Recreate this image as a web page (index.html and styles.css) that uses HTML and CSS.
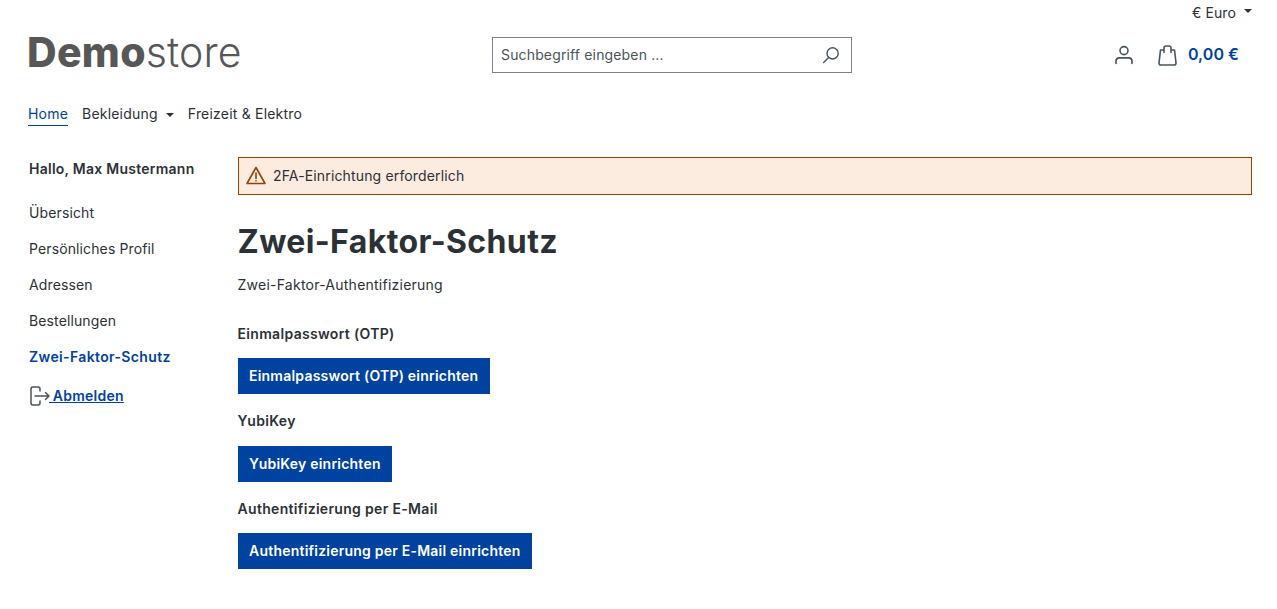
FILE: index.html
```html
<!DOCTYPE html>
<html lang="de">
  <head>
    <meta charset="utf-8">
    <meta name="viewport" content="width=device-width, initial-scale=1" />
    <title>Zwei-Faktor-Schutz</title>
    <link rel="stylesheet" href="styles.css">
  </head>
  <body>

    <div class="top-bar">
      <span class="currency">€ Euro</span>
      <span class="caret"></span>
    </div>

    <header class="header">
      <a class="logo" href="#"><b>Demo</b>store</a>
      <form class="search">
        <input class="search-input" type="text" placeholder="Suchbegriff eingeben ...">
        <svg class="search-icon" width="18" height="18" viewBox="0 0 18 18" fill="none" stroke="#4a545b" stroke-width="1.4">
          <circle cx="10.6" cy="7.4" r="5.6"/>
          <path d="M6.6 11.4 1.6 16.4" stroke-linecap="round"/>
        </svg>
      </form>
      <div class="header-actions">
        <svg class="user-icon" width="18" height="20" viewBox="0 0 18 20" fill="none" stroke="#4a545b" stroke-width="1.6" stroke-linecap="round">
          <circle cx="9" cy="5.6" r="4"/>
          <path d="M1 18.5v-2.2c0-2 1.6-3.4 3.5-3.4h9c1.900 0 3.500 1.400 3.500 3.400v2.200"/>
        </svg>
        <svg class="bag-icon" width="21" height="21" viewBox="0 0 21 21" fill="none" stroke="#4a545b" stroke-width="1.6" stroke-linecap="round" stroke-linejoin="round">
          <path d="M6.500 5H3.500L2 18c-.1 1 .6 2 1.800 2h13.400c1.200 0 1.900-1 1.800-2L17.500 5H14.500"/>
          <path d="M7 7.500V3c0-1.200.8-2 2-2h3c1.200 0 2 .8 2 2v4.500"/>
        </svg>
        <span class="cart-total">0,00 €</span>
      </div>
    </header>

    <nav class="main-nav">
      <a class="nav-link active" href="#">Home</a>
      <a class="nav-link" href="#">Bekleidung <span class="caret"></span></a>
      <a class="nav-link" href="#">Freizeit &amp; Elektro</a>
    </nav>

    <div class="content">
      <aside class="sidebar">
        <div class="hello">Hallo, Max Mustermann</div>
        <a class="side-link" href="#">Übersicht</a>
        <a class="side-link" href="#">Persönliches Profil</a>
        <a class="side-link" href="#">Adressen</a>
        <a class="side-link" href="#">Bestellungen</a>
        <a class="side-link current" href="#">Zwei-Faktor-Schutz</a>
        <a class="logout" href="#">
          <svg width="22" height="20" viewBox="0 0 22 20" fill="none" stroke="#4a545b" stroke-width="1.500" stroke-linecap="round" stroke-linejoin="round">
            <path d="M11 5V3c0-1.200-.8-2-2-2H4C2.800 1 2 1.800 2 3v14c0 1.200.8 2 2 2h5c1.200 0 2-.8 2-2v-2"/>
            <path d="M6 10h14M16.500 6.500 20 10l-3.500 3.500"/>
          </svg><span class="logout-text"> Abmelden</span>
        </a>
      </aside>

      <main class="main">
        <div class="alert">
          <svg width="20" height="19" viewBox="0 0 20 19" fill="none" stroke="#974200" stroke-width="1.600" stroke-linecap="round" stroke-linejoin="round">
            <path d="M10 1.500 1 17.500h18z"/>
            <path d="M10 7v5.500M10 14.800v.2"/>
          </svg>
          <span>2FA-Einrichtung erforderlich</span>
        </div>

        <h1 class="page-title">Zwei-Faktor-Schutz</h1>
        <p class="intro">Zwei-Faktor-Authentifizierung</p>

        <h2 class="method-title">Einmalpasswort (OTP)</h2>
        <a class="btn" href="#">Einmalpasswort (OTP) einrichten</a>

        <h2 class="method-title">YubiKey</h2>
        <a class="btn" href="#">YubiKey einrichten</a>

        <h2 class="method-title">Authentifizierung per E-Mail</h2>
        <a class="btn" href="#">Authentifizierung per E-Mail einrichten</a>
      </main>
    </div>

  </body>
</html>
```

FILE: styles.css
```css
* {
    box-sizing: border-box;
}
body {
    margin: 0;
    font-family: Inter, "Liberation Sans", sans-serif;
    font-size: 14px;
    line-height: 21px;
    font-optical-sizing: none;
    letter-spacing: .12px;
    color: #2b3136;
    background: #fff;
}
a {
    color: inherit;
    text-decoration: none;
}

/* --- top */
.top-bar {
    display: flex;
    justify-content: flex-end;
    align-items: center;
    gap: 8px;
    height: 26px;
    padding: 0 25px 2px 0;
}
.caret {
    display: inline-block;
    width: 0;
    height: 0;
    border-top: 4px solid #2b3136;
    border-left: 4px solid transparent;
    border-right: 4px solid transparent;
    vertical-align: 2px;
    margin-left: 4px;
}
.top-bar .caret {
    margin-left: 0;
    margin-bottom: 2px;
}
.header {
    display: grid;
    grid-template-columns: 464px 360px 1fr;
    align-items: center;
    height: 58px;
    padding: 0 38px 0 28px;
}
.logo {
    margin: -6px 0 0 -1px;
    font-size: 41px;
    line-height: 1;
    letter-spacing: .1px;
    font-weight: 300;
    color: #575757;
}
.logo b {
    font-weight: 800;
    letter-spacing: .3px;
}
.search {
    display: flex;
    align-items: center;
    height: 36px;
    border: 1px solid #798490;
    padding: 0 11px 0 8px;
}
.search-input {
    flex: 1;
    min-width: 0;
    height: 32px;
    margin-top: -2px;
    border: 0;
    outline: 0;
    padding: 0;
    font: inherit;
    letter-spacing: .15px;
    color: #2b3136;
}
.search-input::placeholder {
    color: #4a545b;
    opacity: 1;
}
.header-actions {
    display: flex;
    justify-content: flex-end;
    align-items: center;
}
.bag-icon {
    margin-left: 24px;
}
.cart-total {
    margin-left: 10px;
    margin-bottom: 2px;
    font-size: 16px;
    letter-spacing: .05px;
    font-weight: 600;
    color: #0042a0;
}

/* --- nav */
.main-nav {
    display: flex;
    gap: 14px;
    height: 73px;
    padding: 19px 28px 0;
    letter-spacing: .2px;
}
.nav-link {
    height: 23px;
    line-height: 22px;
}
.nav-link.active {
    color: #0042a0;
    border-bottom: 1px solid #0042a0;
}

/* --- content */
.content {
    display: flex;
    padding: 0 25px 0 29px;
}
.sidebar {
    flex: 0 0 209px;
}
.hello {
    font-weight: 600;
    letter-spacing: .25px;
    margin-top: 1px;
    margin-bottom: 23px;
}
.side-link {
    display: block;
    height: 36px;
    line-height: 21px;
}
.side-link.current {
    font-weight: 600;
    letter-spacing: .36px;
    color: #0042a0;
}
.logout {
    display: flex;
    align-items: center;
    margin-top: 3px;
    font-weight: 600;
    letter-spacing: .25px;
    color: #0042a0;
}
.logout-text {
    margin-left: -2px;
    white-space: pre;
    text-decoration: underline;
}
.main {
    flex: 1;
    min-width: 0;
    margin-left: -.5px;
}
.alert {
    display: flex;
    align-items: center;
    gap: 7px;
    height: 38px;
    margin-left: .5px;
    padding: 0 7px 1px;
    letter-spacing: .15px;
    background: #fcece0;
    border: 1px solid #974200;
}
.page-title {
    margin: 27px 0 12px;
    font-size: 32px;
    line-height: 40px;
    letter-spacing: .38px;
    font-weight: 700;
}
.intro {
    margin: 0 0 28px;
    letter-spacing: .24px;
}
.method-title {
    margin: 0 0 14.2px;
    font-size: 14px;
    line-height: 21px;
    letter-spacing: .32px;
    font-weight: 600;
}
.btn {
    display: table;
    height: 36px;
    margin-bottom: 16.2px;
    margin-left: .5px;
    padding: 0 11.600px 0 11px;
    line-height: 35px;
    letter-spacing: .22px;
    font-weight: 600;
    color: #fff;
    background: #0042a0;
}
```
